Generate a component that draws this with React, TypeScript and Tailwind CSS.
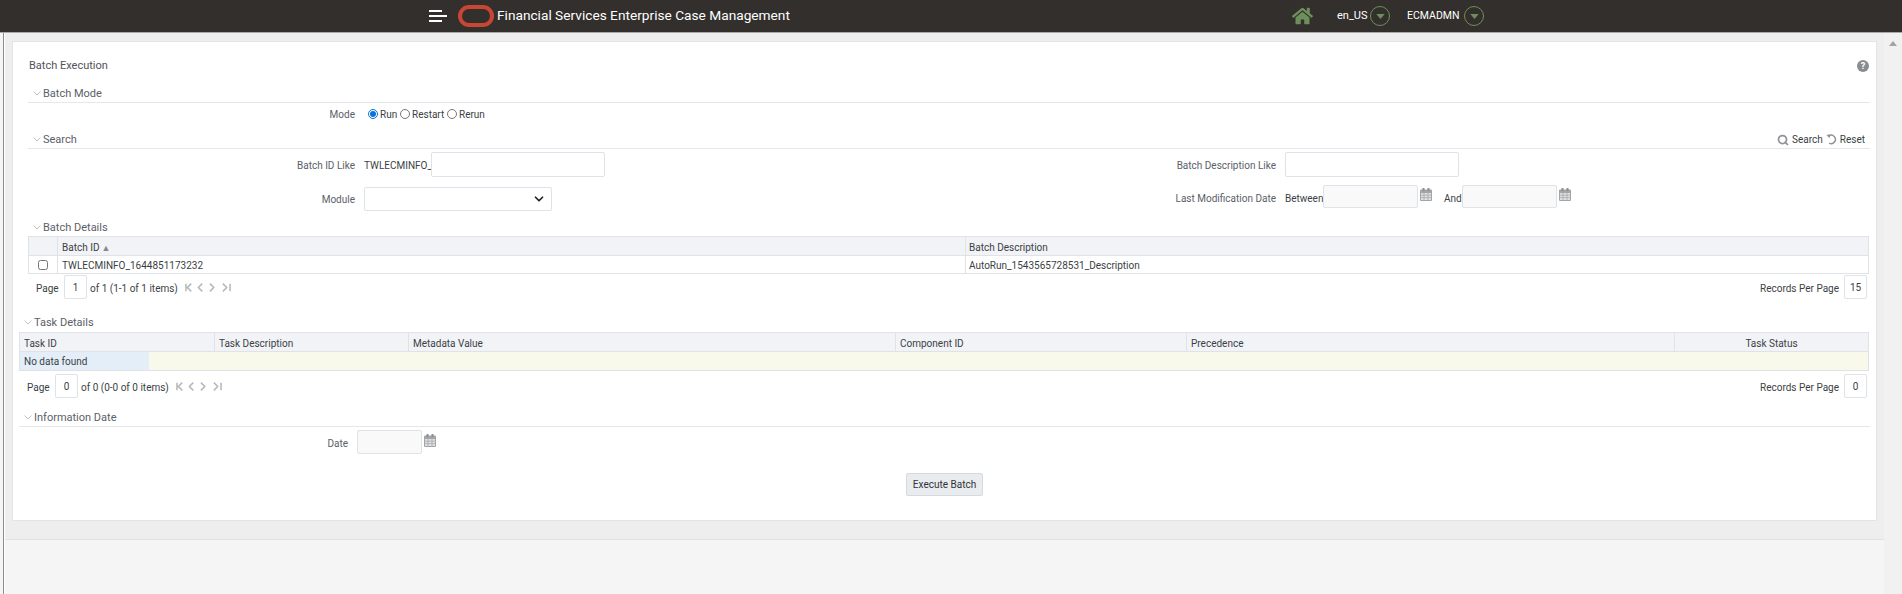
import { ChevronDown, Search } from "lucide-react";
import { FaHome } from "react-icons/fa";

const label = "pt-[2px] text-[10px] text-[#5b6068]";
const body = "text-[10px] text-[#3b3f45]";
const inputBox = "border border-[#dfe2e6] rounded-[2px] bg-white";
const dateBox = "border border-[#dfe2e6] rounded-[2px] bg-[#f9f9f9]";
const cell = "border border-[#dfe3e8] px-[4px] pt-[3px] font-normal";

function Caret() {
  return (
    <span className="flex h-[20px] w-[20px] items-center justify-center rounded-full border border-[#6d8f5c]">
      <svg viewBox="0 0 10 6" className="h-[5px] w-[9px]">
        <path d="M0 0h10L5 6z" fill="#6d8f5c" />
      </svg>
    </span>
  );
}

function SectionHead({ title, line = true, className }: { title: string; line?: boolean; className: string }) {
  return (
    <div className={`flex h-[18px] items-center ${line ? "border-b border-[#e4e7ec]" : ""} ${className}`}>
      <svg viewBox="0 0 8 5" className="mr-[2px] ml-[5px] h-[5px] w-[8px]">
        <path d="M0.5 0.5 4 4l3.5-3.5" fill="none" stroke="#b9bcc0" strokeWidth="0.9" />
      </svg>
      <span className="pt-[2px] text-[11px] text-[#5b6068]">{title}</span>
    </div>
  );
}

function CalendarIcon() {
  return (
    <svg viewBox="0 0 12 13" className="h-[13px] w-[12px] shrink-0">
      <rect x="0" y="1.5" width="12" height="11.5" rx="1" fill="#a2a5a8" />
      <rect x="2.5" y="0" width="2" height="3" fill="#8b8e91" />
      <rect x="7.5" y="0" width="2" height="3" fill="#8b8e91" />
      <path d="M1 5h10v7H1z" fill="#dfe0e1" />
      <path d="M1 7.2h10M1 9.6h10M4 5v7M8 5v7" stroke="#a2a5a8" strokeWidth="0.7" />
    </svg>
  );
}

function PagerIcons() {
  return (
    <svg viewBox="0 0 48 9" className="ml-[8px] h-[9px] w-[46px]" fill="none" stroke="#b4b8bc" strokeWidth="1.6">
      <path d="M1 0.5v8M6.5 0.5 2.5 4.5l4 4" />
      <path d="M18 0.5l-4 4 4 4" />
      <path d="M26 0.5l4 4-4 4" />
      <path d="M39.5 0.5l4 4-4 4M47 0.5v8" />
    </svg>
  );
}

function Pager({ page, summary, perPage, className }: { page: string; summary: string; perPage: string; className: string }) {
  return (
    <div className={`flex items-center justify-between ${body} ${className}`}>
      <div className="flex items-center">
        <span className="w-[21px] pt-[2px]">Page</span>
        <span className={`ml-[7px] flex h-[24px] w-[23px] items-center justify-center ${inputBox}`}>{page}</span>
        <span className="ml-[3px] w-[87px] pt-[2px] whitespace-nowrap">{summary}</span>
        <PagerIcons />
      </div>
      <div className="flex items-center">
        <span className="pt-[2px]">Records Per Page</span>
        <span className={`ml-[5px] flex h-[24px] w-[23px] items-center justify-center ${inputBox}`}>{perPage}</span>
      </div>
    </div>
  );
}

export default function App() {
  return (
    <div className="h-[594px] w-full overflow-hidden bg-[#f5f5f5] font-['Roboto',sans-serif]">
      <header className="flex h-[33px] items-center border-b border-[#a8a8a8] bg-[#332f2c] text-white">
        <div className="ml-[429px] flex w-[18px] flex-col gap-[3px]">
          <span className="h-[2px] w-[13px] bg-white" />
          <span className="h-[2px] w-[18px] bg-white" />
          <span className="h-[2px] w-[13px] bg-white" />
        </div>
        <span className="ml-[11px] h-[22px] w-[36px] rounded-[11px] border-[4px] border-[#c74634]" />
        <h1 className="ml-[3px] w-[291px] text-[13.7px] leading-none font-normal whitespace-nowrap">Financial Services Enterprise Case Management</h1>
        <FaHome className="ml-[504px] h-[20px] w-[21px] text-[#6d8f5c]" />
        <span className="ml-[24px] w-[30px] text-[11px]">en_US</span>
        <span className="ml-[3px]"><Caret /></span>
        <span className="ml-[17px] w-[54px] text-[10.5px]">ECMADMN</span>
        <span className="ml-[3px]"><Caret /></span>
      </header>

      <div className="flex h-[561px] items-start">
        <div className="ml-[3px] h-full w-[1px] bg-[#8f8b87]" />
        <div className="h-full w-[1px] bg-white" />
        <main className="h-[507px] w-[1879px] border-b border-[#e2e2e2] bg-[#eeeeee] px-[7px] pt-[8px]">
          <div className="h-[480px] w-[1865px] border border-[#e2e4e6] bg-white">
            <div className="mt-[14px] flex h-[20px] items-center justify-between pr-[7px] pl-[16px]">
              <span className="text-[11px] text-[#4f5359]">Batch Execution</span>
              <span className="flex h-[12px] w-[12px] items-center justify-center rounded-full bg-[#8a8d90] text-[9px] leading-none font-bold text-white">?</span>
            </div>

            <SectionHead title="Batch Mode" className="mt-[9px] mr-[6px] ml-[15px]" />
            <div className="flex h-[20px] items-center">
              <span className={`w-[342px] text-right ${label}`}>Mode</span>
              <div className={`ml-[13px] flex items-center pt-[2px] ${body}`}>
                <input type="radio" name="mode" defaultChecked className="h-[10px] w-[10px] accent-[#0a74da]" />
                <span className="ml-[2px] w-[16px]">Run</span>
                <input type="radio" name="mode" className="ml-[4px] h-[10px] w-[10px]" />
                <span className="ml-[2px] w-[31px]">Restart</span>
                <input type="radio" name="mode" className="ml-[4px] h-[10px] w-[10px]" />
                <span className="ml-[2px]">Rerun</span>
              </div>
            </div>

            <div className="relative">
              <SectionHead title="Search" className="mt-[8px] mr-[6px] ml-[15px]" />
              <div className={`absolute top-[1px] right-[11px] flex items-center ${body}`}>
                <Search className="h-[12px] w-[12px] text-[#8f9296]" strokeWidth={3.5} />
                <span className="ml-[3px]">Search</span>
                <svg viewBox="0 0 12 12" className="ml-[3px] h-[11px] w-[11px]" fill="none" stroke="#8f9296" strokeWidth="1.6">
                  <path d="M3 2.2A4.6 4.6 0 1 1 3.4 10" />
                  <path d="M0.8 1 4.6 0.7 3.8 4.3z" fill="#8f9296" strokeWidth="0.4" />
                </svg>
                <span className="ml-[3px]">Reset</span>
              </div>
            </div>

            <div className="mt-[3px] flex h-[25px] items-center">
              <span className={`w-[342px] text-right ${label}`}>Batch ID Like</span>
              <span className={`ml-[9px] w-[67px] pt-[2px] whitespace-nowrap ${body}`}>TWLECMINFO_</span>
              <span className={`h-[25px] w-[174px] ${inputBox}`} />
              <span className={`w-[671px] text-right ${label}`}>Batch Description Like</span>
              <span className={`ml-[9px] h-[25px] w-[174px] ${inputBox}`} />
            </div>

            <div className="mt-[8px] flex h-[26px] items-start">
              <span className={`mt-[5px] w-[342px] text-right ${label}`}>Module</span>
              <span className={`mt-[2px] ml-[9px] flex h-[24px] w-[188px] items-center justify-end pr-[5px] ${inputBox}`}>
                <ChevronDown className="h-[14px] w-[14px] text-[#222222]" strokeWidth={3} />
              </span>
              <span className={`mt-[4px] w-[724px] text-right ${label}`}>Last Modification Date</span>
              <span className={`mt-[6px] ml-[9px] w-[38px] ${body}`}>Between</span>
              <span className={`h-[23px] w-[95px] ${dateBox}`} />
              <span className="mt-[3px] ml-[2px]"><CalendarIcon /></span>
              <span className={`mt-[6px] ml-[12px] w-[18px] ${body}`}>And</span>
              <span className={`h-[23px] w-[95px] ${dateBox}`} />
              <span className="mt-[3px] ml-[2px]"><CalendarIcon /></span>
            </div>

            <SectionHead title="Batch Details" line={false} className="mt-[7px] mr-[6px] ml-[15px]" />
            <table className={`ml-[15px] w-[1841px] table-fixed border-collapse border border-[#dfe3e8] text-left leading-[14px] ${body}`}>
              <colgroup>
                <col className="w-[29px]" />
                <col className="w-[908px]" />
                <col />
              </colgroup>
              <thead>
                <tr className="h-[19px] bg-[#f1f3f7]">
                  <th className="border border-[#dfe3e8] font-normal" />
                  <th className={cell}>
                    Batch ID
                    <span className="ml-[2px] text-[9px] text-[#85888c]">▲</span>
                  </th>
                  <th className={`${cell} !px-[3px]`}>Batch Description</th>
                </tr>
              </thead>
              <tbody>
                <tr className="h-[18px]">
                  <td className="border border-[#dfe3e8] text-center">
                    <input type="checkbox" className="mx-auto block h-[10px] w-[10px]" />
                  </td>
                  <td className={cell}>TWLECMINFO_1644851173232</td>
                  <td className={`${cell} !px-[3px]`}>AutoRun_1543565728531_Description</td>
                </tr>
              </tbody>
            </table>
            <Pager page="1" summary="of 1 (1-1 of 1 items)" perPage="15" className="mt-[1px] mr-[9px] ml-[23px] h-[24px]" />

            <SectionHead title="Task Details" line={false} className="mt-[14px] mr-[6px] ml-[6px]" />
            <table className={`mt-[1px] ml-[6px] w-[1850px] table-fixed border-collapse border border-[#dfe3e8] text-left leading-[14px] ${body}`}>
              <colgroup>
                <col className="w-[195px]" />
                <col className="w-[194px]" />
                <col className="w-[487px]" />
                <col className="w-[291px]" />
                <col className="w-[488px]" />
                <col />
              </colgroup>
              <thead>
                <tr className="h-[19px] bg-[#f1f3f7]">
                  <th className={cell}>Task ID</th>
                  <th className={cell}>Task Description</th>
                  <th className={cell}>Metadata Value</th>
                  <th className={cell}>Component ID</th>
                  <th className={cell}>Precedence</th>
                  <th className={`${cell} text-center`}>Task Status</th>
                </tr>
              </thead>
              <tbody>
                <tr className="h-[18px] bg-[#f8f9ea]">
                  <td colSpan={6} className="p-0">
                    <div className="flex h-[18px] w-[129px] items-center bg-[#e3eef8] px-[4px] pt-[1px]">No data found</div>
                  </td>
                </tr>
              </tbody>
            </table>
            <Pager page="0" summary="of 0 (0-0 of 0 items)" perPage="0" className="mt-[3px] mr-[9px] ml-[14px] h-[24px]" />

            <SectionHead title="Information Date" className="mt-[11px] mr-[6px] ml-[6px]" />
            <div className="mt-[3px] flex h-[24px] items-start">
              <span className={`mt-[4px] w-[335px] text-right ${label}`}>Date</span>
              <span className={`ml-[9px] h-[24px] w-[65px] ${dateBox}`} />
              <span className="mt-[4px] ml-[2px]"><CalendarIcon /></span>
            </div>

            <div className="mt-[19px] flex justify-center">
              <button className="h-[23px] w-[77px] rounded-[2px] border border-[#d6d9de] bg-[#e9ecef] text-[10px] text-[#2f3338]">Execute Batch</button>
            </div>
          </div>
        </main>
        <div className="flex h-full flex-1 justify-center bg-[#f1f1f1] pt-[8px]">
          <svg viewBox="0 0 8 5" className="h-[5px] w-[8px]">
            <path d="M0 5 4 0l4 5z" fill="#a3a3a3" />
          </svg>
        </div>
      </div>
    </div>
  );
}
